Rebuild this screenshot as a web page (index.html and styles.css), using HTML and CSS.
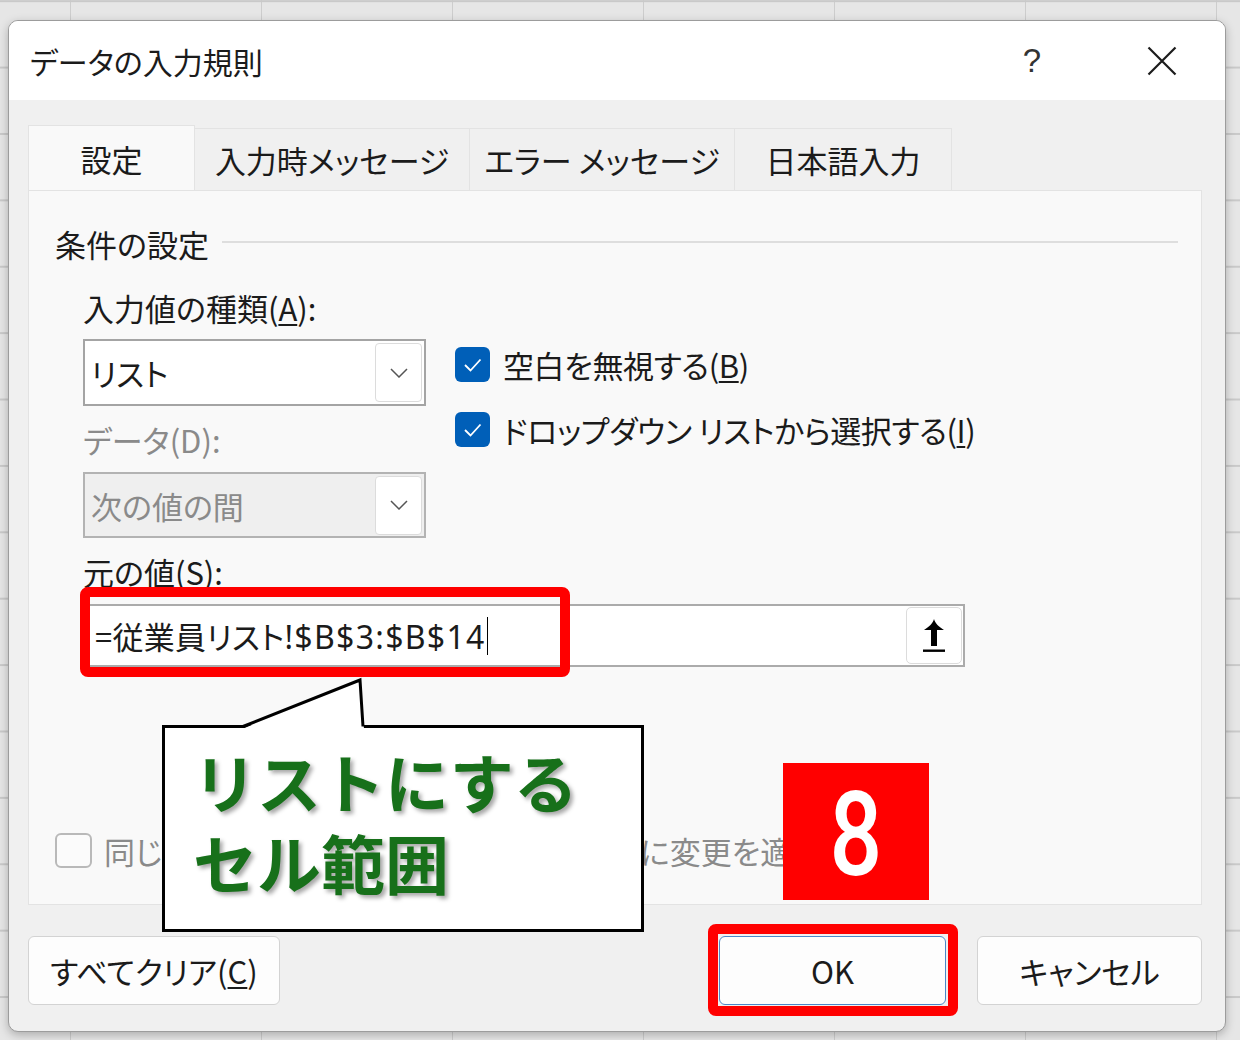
FILE: index.html
```html
<!DOCTYPE html>
<html lang="ja">
<head>
<meta charset="utf-8">
<title>データの入力規則</title>
<link rel="stylesheet" href="styles.css">
</head>
<body>
<div class="dialog">
  <div class="titlebar">
    <span class="title">データの入力規則</span>
    <span class="help">?</span>
    <span class="close"><svg width="30" height="30" viewBox="0 0 30 30"><path d="M1.5 1.5 L28.5 28.5 M28.5 1.5 L1.5 28.5" stroke="#1b1b1b" stroke-width="2.2" fill="none"/></svg></span>
  </div>
  <div class="content">
    <div class="tabs">
      <div class="tab active t1">設定</div>
      <div class="tab t2">入力時メッセージ</div>
      <div class="tab t3">エラー メッセージ</div>
      <div class="tab t4">日本語入力</div>
    </div>
    <div class="panel">
      <div class="legend"><span>条件の設定</span><span class="rule"></span></div>
      <div class="indent">
        <div class="cols">
          <div class="left">
            <div class="label first">入力値の種類(<u>A</u>):</div>
            <div class="select">
              <span class="value">リスト</span>
              <span class="dd"><svg width="18" height="10" viewBox="0 0 18 10"><polyline points="1,1 9,9 17,1" stroke="#555" stroke-width="1.5" fill="none"/></svg></span>
            </div>
            <div class="label dim gap14">データ(D):</div>
            <div class="select disabled">
              <span class="value">次の値の間</span>
              <span class="dd"><svg width="18" height="10" viewBox="0 0 18 10"><polyline points="1,1 9,9 17,1" stroke="#555" stroke-width="1.5" fill="none"/></svg></span>
            </div>
          </div>
          <div class="right">
            <div class="check">
              <span class="box on"><svg width="35" height="35" viewBox="0 0 35 35"><polyline points="10,18 15.5,23.5 25.5,12.5" stroke="#fff" stroke-width="1.8" fill="none"/></svg></span>
              <span>空白を無視する(<u>B</u>)</span>
            </div>
            <div class="check second">
              <span class="box on"><svg width="35" height="35" viewBox="0 0 35 35"><polyline points="10,18 15.5,23.5 25.5,12.5" stroke="#fff" stroke-width="1.8" fill="none"/></svg></span>
              <span>ドロップダウン リストから選択する(<u>I</u>)</span>
            </div>
          </div>
        </div>
        <div class="label gap14">元の値(<u>S</u>):</div>
        <div class="input">
          <span class="val">=従業員リスト<span class="lat">!$B$3:$B$14</span></span><span class="caret"></span>
          <span class="refbtn"><svg width="24" height="36" viewBox="0 0 24 36"><path d="M12 1 C13 5 17 9 22 12 L15 12 L15 28 L9 28 L9 12 L2 12 C7 9 11 5 12 1 Z" fill="#000"/><rect x="1" y="31.5" width="22" height="2.4" fill="#000"/></svg></span>
        </div>
      </div>
      <div class="check apply">
        <span class="box off"></span>
        <span class="dimtext">同じ入力規則が設定されたすべてのセルに変更を適用する(P)</span>
      </div>
    </div>
    <div class="buttons">
      <button class="btn clear">すべてクリア(<u>C</u>)</button>
      <button class="btn ok">OK</button>
      <button class="btn cancel">キャンセル</button>
    </div>
  </div>
</div>

<div class="hl hl-input"></div>
<div class="hl hl-ok"></div>

<div class="callout">
  <div class="callout-text">リストにする<br>セル範囲</div>
</div>
<svg class="tail" width="130" height="56" viewBox="0 0 130 56">
  <polygon points="2,53 120,4 124,53" fill="#fff"/>
  <polyline points="3,50.5 120,4 123,50.5" stroke="#000" stroke-width="3" fill="none" stroke-linejoin="miter"/>
</svg>

<div class="badge"><span>8</span></div>
</body>
</html>
```
FILE: styles.css
```css
* { box-sizing: border-box; }

body {
  margin: 0;
  padding: 20px 0 0 8px;
  width: 1240px;
  height: 1040px;
  overflow: hidden;
  position: relative;
  font-family: "Noto Sans CJK JP", sans-serif;
  font-feature-settings: "palt";
  color: #1b1b1b;
  background-color: #e6e6e6;
  background-image:
    linear-gradient(#c9c9c9 0 1.5px, transparent 1.5px),
    linear-gradient(to right, #cdcdcd 0 1.5px, transparent 1.5px);
  background-size: 100% 66.4px, 191px 100%;
  background-position: 0 0.2px, 70px 0;
}

.dialog {
  width: 1218px;
  height: 1012px;
  border: 1px solid #9c9c9c;
  border-radius: 10px;
  background: #f0f0f0;
  box-shadow: 0 3px 10px rgba(0,0,0,0.25);
  overflow: hidden;
}

.titlebar {
  height: 79px;
  background: #fff;
  display: flex;
  align-items: center;
  padding-left: 21px;
  padding-right: 33px;
}
.title { font-size: 30px; }
.help {
  margin-left: auto;
  width: 40px;
  text-align: center;
  font-size: 33px;
  font-family: "Liberation Sans", sans-serif;
  color: #333;
}
.close {
  width: 60px;
  margin-left: 80px;
  display: flex;
  justify-content: center;
}

.content { padding: 25px 23px 0 19px; }

.tabs {
  display: flex;
  align-items: flex-end;
  height: 65px;
}
.tab {
  height: 62px;
  border: 1px solid #e3e3e3;
  border-bottom: none;
  background: #f0f0f0;
  font-size: 31px;
  display: flex;
  align-items: center;
  justify-content: center;
  margin-left: -1px;
}
.tab.active {
  height: 65px;
  background: #f9f9f9;
  margin-left: 0;
  position: relative;
  z-index: 1;
}
.t1 { width: 167px; }
.t2 { width: 276px; }
.t3 { width: 266px; }
.t4 { width: 218px; }

.panel {
  height: 715px;
  background: #f9f9f9;
  border: 1px solid #e3e3e3;
  padding: 0 23px 0 26px;
}

.legend {
  margin-top: 32px;
  height: 40px;
  display: flex;
  align-items: center;
  font-size: 31px;
}
.legend .rule {
  flex: 1;
  height: 2px;
  background: #dedede;
  margin-left: 13px;
  margin-top: -3px;
}

.indent { padding-left: 28px; }

.cols { display: flex; }
.left { width: 343px; }
.right { margin-left: 29px; padding-top: 84px; }

.label {
  height: 40px;
  line-height: 40px;
  font-size: 31px;
  margin-top: 25px;
}
.label.gap14 { margin-top: 14px; }
.label.dim { color: #8a8a8a; }
.label u, .check u, .btn u { text-underline-offset: 3px; text-decoration-thickness: 1.5px; }

.select {
  margin-top: 11px;
  height: 67px;
  border: 2px solid #a4a4a4;
  background: #fff;
  display: flex;
  align-items: center;
  padding-left: 6px;
  font-size: 31px;
}
.select.disabled {
  margin-top: 12px;
  height: 66px;
  background: #efefef;
  border-color: #b3b3b3;
  color: #8a8a8a;
}
.dd {
  margin-left: auto;
  margin-right: 2px;
  width: 47px;
  height: 59px;
  border: 1px solid #dcdcdc;
  border-radius: 4px;
  background: #fff;
  display: flex;
  align-items: center;
  justify-content: center;
}

.check {
  display: flex;
  align-items: center;
  height: 35px;
  font-size: 31px;
  white-space: nowrap;
}
.right .check span:last-child { letter-spacing: -0.4px; }
.check.second { margin-top: 30px; }
.box {
  width: 35px;
  height: 35px;
  border-radius: 6px;
  margin-right: 13px;
  flex: none;
  display: block;
}
.box.on { background: #005fb8; }
.box svg { display: block; }
.box.off {
  width: 37px;
  border: 2px solid #b9b9b9;
  background: #fbfbfb;
  margin-right: 12px;
}

.input {
  margin-top: 12px;
  width: 882px;
  height: 63px;
  border: 2px solid #ababab;
  background: #fff;
  display: flex;
  align-items: center;
  padding-left: 10px;
  font-size: 31px;
}
.val { white-space: nowrap; letter-spacing: 0.3px; }
.lat {
  font-family: "Noto Sans", "Noto Sans CJK JP", sans-serif;
  font-size: 32px;
  letter-spacing: 1.3px;
}
.caret {
  width: 1.5px;
  height: 38px;
  background: #000;
  margin-left: 1px;
}
.refbtn {
  margin-left: auto;
  margin-right: 1px;
  width: 56px;
  height: 57px;
  border: 1px solid #dcdcdc;
  border-radius: 5px;
  background: #fff;
  display: flex;
  align-items: center;
  justify-content: center;
}

.check.apply { margin-top: 166px; }
.dimtext { color: #8a8a8a; }

.buttons {
  margin-top: 31px;
  height: 69px;
  display: flex;
}
.btn {
  height: 69px;
  border: 1px solid #d3d3d3;
  border-radius: 6px;
  background: #fdfdfd;
  font-family: "Noto Sans CJK JP", sans-serif;
  font-feature-settings: "palt";
  font-size: 31px;
  color: #1b1b1b;
  padding: 0;
}
.clear { width: 252px; }
.ok { width: 227px; margin-left: auto; border: 1.5px solid #4a86c8; }
.cancel { width: 225px; margin-left: 31px; }

/* annotation overlays */
.hl {
  position: absolute;
  border: 10px solid #ff0000;
  border-radius: 8px;
}
.hl-input { left: 80px; top: 587px; width: 490px; height: 90px; }
.hl-ok { left: 708px; top: 924px; width: 250px; height: 92px; }

.callout {
  position: absolute;
  left: 162px;
  top: 725px;
  width: 482px;
  height: 207px;
  border: 3px solid #000;
  background: #fff;
  padding: 12px 0 0 28px;
}
.callout-text {
  font-size: 64px;
  line-height: 81px;
  font-weight: 700;
  color: #17701a;
  font-feature-settings: normal;
  text-shadow: 3px 3px 4px rgba(0,0,0,0.35);
  white-space: nowrap;
}
.tail {
  position: absolute;
  left: 240px;
  top: 676px;
}

.badge {
  position: absolute;
  left: 783px;
  top: 763px;
  width: 146px;
  height: 137px;
  background: #ff0000;
  display: flex;
  align-items: center;
  justify-content: center;
  padding-top: 6px;
}
.badge span {
  color: #fff;
  font-family: Roboto, "Liberation Sans", sans-serif;
  font-weight: 500;
  font-size: 116px;
  line-height: 1;
  display: inline-block;
  transform: scaleX(0.8);
}
```
